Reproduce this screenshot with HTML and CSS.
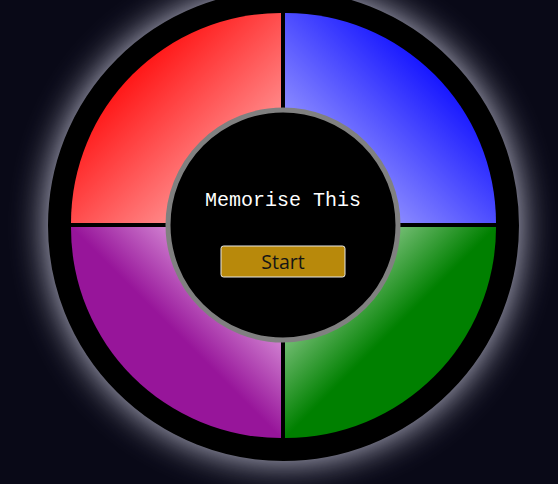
FILE: index.html
```html
<!DOCTYPE html>
<html lang="en">
<head>
<meta charset="utf-8">
<title>Memorise This</title>
<link rel="stylesheet" href="styles.css">
</head>
<body>
<div class="board">
  <div class="pad pad-red"></div>
  <div class="pad pad-blue"></div>
  <div class="pad pad-purple"></div>
  <div class="pad pad-green"></div>
  <div class="hub">
    <div class="title">Memorise This</div>
    <button class="start">Start</button>
  </div>
</div>
</body>
</html>
```
FILE: styles.css
```css
html, body {
  margin: 0;
  padding: 0;
  background: #090917;
  width: 558px;
  height: 484px;
  overflow: hidden;
}

.board {
  position: relative;
  box-sizing: content-box;
  width: 425px;
  height: 425px;
  border: 23.5px solid #000;
  border-radius: 50%;
  background: #000;
  margin: -10.5px 0 0 47.5px;
  box-shadow: 0 0 36px rgba(235, 235, 255, 0.85);
  display: grid;
  grid-template-columns: 1fr 1fr;
  grid-template-rows: 1fr 1fr;
  gap: 4px;
}

.pad {
  width: 100%;
  height: 100%;
}

.pad-red {
  border-top-left-radius: 100%;
  background: linear-gradient(to bottom right, #ff0000 20%, #ffcdcd 100%);
}

.pad-blue {
  border-top-right-radius: 100%;
  background: linear-gradient(to bottom left, #0000ff 20%, #d0d0ff 100%);
}

.pad-purple {
  border-bottom-left-radius: 100%;
  background: linear-gradient(to top right, #97159a 0%, #97159a 50%, #d080d0 73%, #f0d0f0 100%);
}

.pad-green {
  border-bottom-right-radius: 100%;
  background: linear-gradient(to bottom right, #c8e4c8 0%, #72bc72 27%, #008000 50%, #008000 100%);
}

.hub {
  position: absolute;
  left: 50%;
  top: 50%;
  transform: translate(-50%, -50%);
  box-sizing: border-box;
  width: 235px;
  height: 235px;
  border: 5px solid #808080;
  border-radius: 50%;
  background: #000;
  display: flex;
  flex-direction: column;
  align-items: center;
  padding-top: 76px;
}

.title {
  font-family: "Courier New", "Liberation Mono", monospace;
  font-size: 20px;
  line-height: 24px;
  color: #ffffff;
  white-space: nowrap;
}

.start {
  margin-top: 33px;
  box-sizing: border-box;
  width: 125px;
  height: 32px;
  background: #b8890b;
  border: 1px solid #e8e8e8;
  border-radius: 3px;
  font-family: "Open Sans", "Noto Sans", sans-serif;
  font-size: 19.5px;
  line-height: 28px;
  color: #151515;
  padding: 0;
}
```
